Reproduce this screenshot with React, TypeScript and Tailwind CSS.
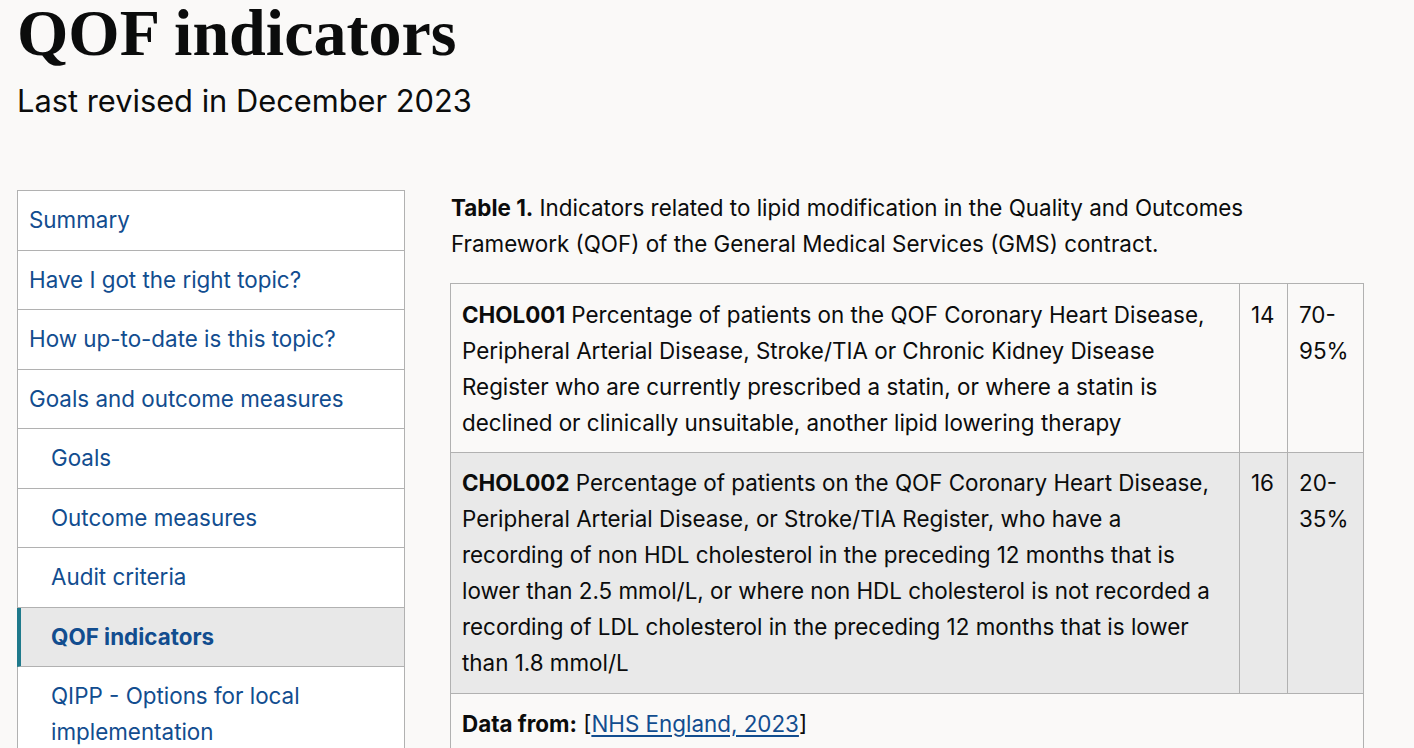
import React from "react";

type NavItem = { label: string; nested?: boolean; active?: boolean };

const navItems: NavItem[] = [
  { label: "Summary" },
  { label: "Have I got the right topic?" },
  { label: "How up-to-date is this topic?" },
  { label: "Goals and outcome measures" },
  { label: "Goals", nested: true },
  { label: "Outcome measures", nested: true },
  { label: "Audit criteria", nested: true },
  { label: "QOF indicators", nested: true, active: true },
  { label: "QIPP - Options for local implementation", nested: true },
];

function SideNav() {
  return (
    <nav className="w-[388px] shrink-0 border border-[#b1b1b1] bg-white">
      <ul>
        {navItems.map((item) => (
          <li
            key={item.label}
            className={
              "border-b border-[#b1b1b1] last:border-b-0 " +
              (item.active ? "bg-[#e8e8e8] border-l-4 border-l-[#1f7a8c] -ml-px " : "")
            }
          >
            <a
              href="#"
              className={
                "block py-[11.25px] pr-3 text-[22.4px] leading-[36px] text-[#124d8f] " +
                (item.nested ? (item.active ? "pl-[30px] font-bold" : "pl-[33px]") : "pl-[11px]")
              }
            >
              {item.label}
            </a>
          </li>
        ))}
      </ul>
    </nav>
  );
}

function IndicatorsTable() {
  return (
    <div className="w-[913px]">
      <p className="mb-[21px] pl-px text-[22.4px] leading-[36px] text-[#0b0c0c]">
        <strong className="font-bold">Table 1.</strong> Indicators related to lipid modification in the Quality and
        Outcomes Framework (QOF) of the General Medical Services (GMS) contract.
      </p>
      <table className="w-[913px] table-fixed border-collapse text-[22.4px] leading-[36px] text-[#0b0c0c]">
        <colgroup>
          <col className="w-[789px]" />
          <col className="w-[48px]" />
          <col className="w-[76px]" />
        </colgroup>
        <tbody>
          <tr>
            <td className="border border-[#b1b1b1] px-[11px] pt-[13px] pb-[11px] align-top">
              <strong className="font-bold">CHOL001</strong> Percentage of patients on the QOF Coronary Heart Disease,
              Peripheral Arterial Disease, Stroke/TIA or Chronic Kidney Disease Register who are currently prescribed a
              statin, or where a statin is declined or clinically unsuitable, another lipid lowering therapy
            </td>
            <td className="border border-[#b1b1b1] px-[11px] pt-[13px] pb-[11px] align-top">14</td>
            <td className="border border-[#b1b1b1] px-[11px] pt-[13px] pb-[11px] align-top">70-95%</td>
          </tr>
          <tr className="bg-[#e9e9e9]">
            <td className="border border-[#b1b1b1] px-[11px] py-3 align-top">
              <strong className="font-bold">CHOL002</strong> Percentage of patients on the QOF Coronary Heart Disease,
              Peripheral Arterial Disease, or Stroke/TIA Register, who have a recording of non HDL cholesterol in the
              preceding 12 months that is lower than 2.5 mmol/L, or where non HDL cholesterol is not recorded a
              recording of LDL cholesterol in the preceding 12 months that is lower than 1.8 mmol/L
            </td>
            <td className="border border-[#b1b1b1] px-[11px] py-3 align-top">16</td>
            <td className="border border-[#b1b1b1] px-[11px] py-3 align-top">20-35%</td>
          </tr>
          <tr>
            <td colSpan={3} className="border border-[#b1b1b1] px-[11px] py-3 align-top">
              <strong className="font-bold">Data from:</strong> [
              <a href="#" className="text-[#124d8f] underline underline-offset-[3px]">
                NHS England, 2023
              </a>
              ]
            </td>
          </tr>
        </tbody>
      </table>
    </div>
  );
}

export default function App() {
  return (
    <div
      className="min-h-screen bg-[#faf9f8] pl-[17px] text-[#0b0c0c]"
      style={{ fontFamily: "Inter, 'Noto Sans', sans-serif" }}
    >
      <h1
        className="text-[66px] font-bold leading-none text-[#0b0c0c]"
        style={{ fontFamily: "'Liberation Serif', 'DejaVu Serif', serif" }}
      >
        QOF indicators
      </h1>
      <p className="mt-[15px] text-[30.8px] leading-[40px]">Last revised in December 2023</p>
      <div className="mt-[69px] flex items-start gap-[45px]">
        <SideNav />
        <IndicatorsTable />
      </div>
    </div>
  );
}
